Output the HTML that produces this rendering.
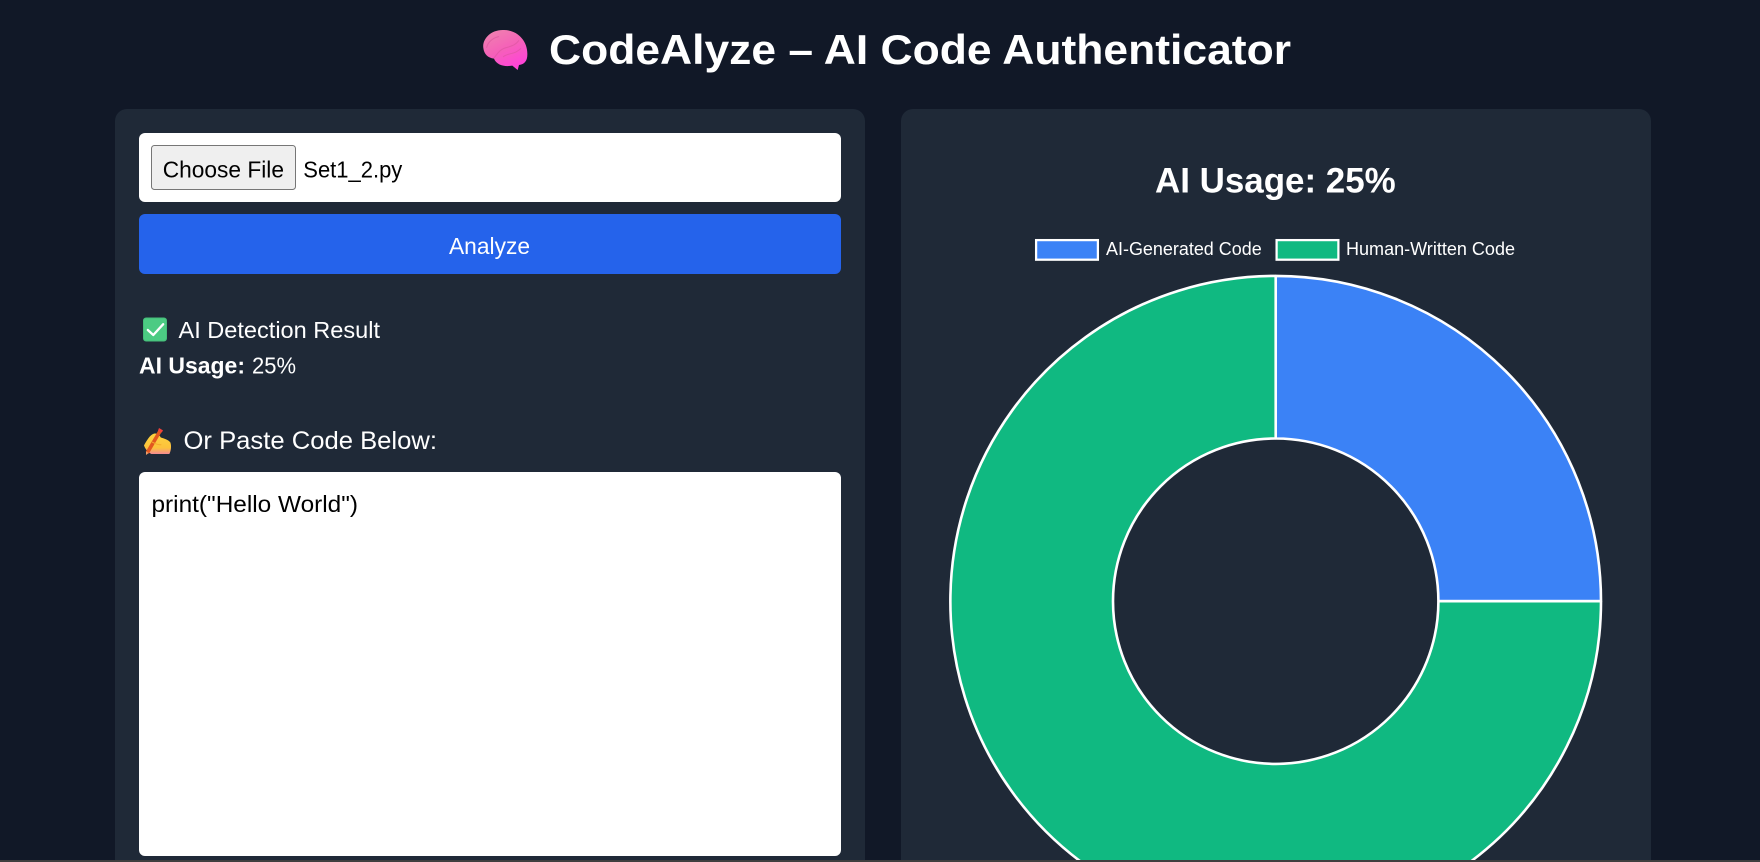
<!DOCTYPE html>
<html lang="en">
<head>
<meta charset="utf-8">
<title>CodeAlyze – AI Code Authenticator</title>
<style>
html,body{margin:0;padding:0;width:1760px;height:862px;overflow:hidden;background:#111827}
body{position:relative;font-family:"Liberation Sans",sans-serif}
.panel{position:absolute;top:109px;width:750px;height:753px;background:#1f2937;border-radius:12px 12px 0 0}
.box{position:absolute;left:139px;width:702px;border-radius:6px}
.filebtn{position:absolute;left:151px;top:145px;width:145px;height:45px;box-sizing:border-box;background:#efefef;border:1.2px solid #767676;border-radius:3.4px}
.bar{position:absolute;left:0;top:860px;width:1760px;height:2px;background:#3f3f3f}
svg.layer{position:absolute;left:0;top:0;display:block}
text{font-family:"Liberation Sans",sans-serif}
</style>
</head>
<body>
<div class="panel" style="left:115px"></div>
<div class="panel" style="left:901px"></div>
<div class="box" style="top:133px;height:69px;background:#fff"></div>
<div class="filebtn"></div>
<div class="box" style="top:214px;height:60px;background:#2563eb"></div>
<div class="box" style="top:472px;height:384px;background:#fff"></div>

<svg class="layer" width="1760" height="862" viewBox="0 0 1760 862" xmlns="http://www.w3.org/2000/svg">
  <defs>
    <linearGradient id="brain" x1="0" y1="0" x2="0.5" y2="1">
      <stop offset="0" stop-color="#ee86ae"/>
      <stop offset="0.55" stop-color="#f562b8"/>
      <stop offset="1" stop-color="#ff45d6"/>
    </linearGradient>
    <linearGradient id="hand" x1="0" y1="0" x2="0" y2="1">
      <stop offset="0" stop-color="#fdd23e"/>
      <stop offset="0.7" stop-color="#fcc23c"/>
      <stop offset="1" stop-color="#f58a92"/>
    </linearGradient>
  </defs>

  <!-- brain emoji -->
  <g transform="translate(470 10) scale(.3333)">
    <path d="M40 114 C36 88 62 58 102 60 C142 60 172 92 172 130 C173 152 164 163 147 165 L143 180 L127 167 C104 171 80 166 72 146 C54 144 42 132 40 114 Z" fill="url(#brain)"/>
    <path d="M50 112 C54 96 68 84 86 80 M72 144 C84 128 92 116 112 112 C124 108 136 106 146 92 M100 140 C116 128 134 134 152 116" fill="none" stroke="#d9559c" stroke-opacity=".6" stroke-width="3" stroke-linecap="round"/>
  </g>

  <!-- check emoji -->
  <rect x="143.5" y="318" width="23" height="23" rx="2.6" fill="#4ccb83" stroke="#45bd79" stroke-width="1"/>
  <path d="M147.8 330 L153.3 335 L163.2 324.2" fill="none" stroke="#fff" stroke-width="2.3" stroke-linecap="round" stroke-linejoin="round"/>

  <!-- writing hand emoji -->
  <g transform="translate(130 420) scale(.3333)">
    <path d="M42 76 C50 62 60 44 72 41 C82 39 88 45 92 52 C102 56 114 58 121 67 C125 78 123 92 118 102 L64 102 C54 96 46 88 42 76 Z" fill="url(#hand)"/>
    <path d="M92 30 L52 98" stroke="#e2571f" stroke-width="11" stroke-linecap="butt"/>
    <path d="M87 24 L99 31 L95 38 L84 32 Z" fill="#f0413a"/>
    <path d="M48 94 L56 99 L48 105 Z" fill="#f0a06a"/>
    <path d="M66 66 C74 70 84 76 94 74" fill="none" stroke="#f3ab2d" stroke-width="3"/>
  </g>

  <!-- page title -->
  <text x="549" y="64" font-size="42" font-weight="700" fill="#fff" textLength="742" lengthAdjust="spacingAndGlyphs">CodeAlyze – AI Code Authenticator</text>

  <!-- left panel text -->
  <text x="162.7" y="177.7" font-size="23" fill="#000" textLength="121.3" lengthAdjust="spacingAndGlyphs">Choose File</text>
  <text x="303.3" y="177.7" font-size="23" fill="#000" textLength="99" lengthAdjust="spacingAndGlyphs">Set1_2.py</text>
  <text x="449" y="254" font-size="23" fill="#fff" textLength="81" lengthAdjust="spacingAndGlyphs">Analyze</text>
  <text x="178.5" y="338" font-size="23" fill="#fff" textLength="201.5" lengthAdjust="spacingAndGlyphs">AI Detection Result</text>
  <text x="139" y="373.7" font-size="23" font-weight="700" fill="#fff" textLength="106" lengthAdjust="spacingAndGlyphs">AI Usage:</text>
  <text x="252" y="373.7" font-size="23" fill="#fff" textLength="44" lengthAdjust="spacingAndGlyphs">25%</text>
  <text x="183.5" y="449" font-size="25" fill="#fff" textLength="253.5" lengthAdjust="spacingAndGlyphs">Or Paste Code Below:</text>
  <text x="151.5" y="512" font-size="23" fill="#000" textLength="206.5" lengthAdjust="spacingAndGlyphs">print("Hello World")</text>

  <!-- right panel heading -->
  <text x="1155" y="192.7" font-size="35" font-weight="700" fill="#fff" textLength="240.7" lengthAdjust="spacingAndGlyphs">AI Usage: 25%</text>

  <!-- legend -->
  <rect x="1036.1" y="240.1" width="61.8" height="19.6" fill="#3b82f6" stroke="#fff" stroke-width="2.25"/>
  <text x="1106" y="255" font-size="18" fill="#fff" textLength="155.7" lengthAdjust="spacingAndGlyphs">AI-Generated Code</text>
  <rect x="1276.6" y="240.1" width="61.8" height="19.6" fill="#10b981" stroke="#fff" stroke-width="2.25"/>
  <text x="1346" y="255" font-size="18" fill="#fff" textLength="169" lengthAdjust="spacingAndGlyphs">Human-Written Code</text>

  <!-- donut chart, trimmed at the window edge -->
  <path d="M1275.7 275.9 A325.3 325.3 0 0 1 1601 601.2 L1438.4 601.2 A162.7 162.7 0 0 0 1275.7 438.5 Z" fill="#3b82f6" stroke="#fff" stroke-width="2.6" stroke-linejoin="bevel"/>
  <path d="M1601 601.2 A325.3 325.3 0 0 1 1471.5 861 L1079.9 861 A325.3 325.3 0 0 1 1275.7 275.9 L1275.7 438.5 A162.7 162.7 0 1 0 1438.4 601.2 Z" fill="#10b981"/>
  <path d="M1471.5 861 A325.3 325.3 0 0 0 1601 601.2 L1438.4 601.2 A162.7 162.7 0 1 1 1275.7 438.5 L1275.7 275.9 A325.3 325.3 0 0 0 1079.9 861" fill="none" stroke="#fff" stroke-width="2.6" stroke-linejoin="bevel"/>
</svg>
<div class="bar"></div>
</body>
</html>
